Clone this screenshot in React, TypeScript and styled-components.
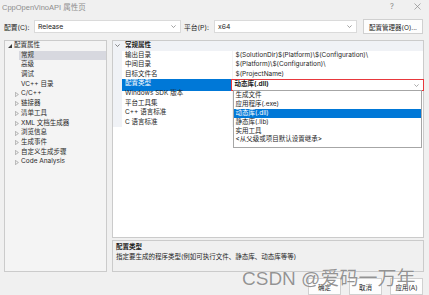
import styled, { createGlobalStyle } from "styled-components";

const GlobalStyle = createGlobalStyle`
  html, body {
    margin: 0;
    padding: 0;
    background: #f0f0f0;
  }
  body {
    font-family: Inter, "Noto Sans CJK SC", sans-serif;
    color: #1e1e1e;
  }
`;

const Window = styled.div`
  position: relative;
  width: 429px;
  height: 295px;
  overflow: hidden;
  background: #f0f0f0;
  font-size: 6.5px;
`;

const TitleBar = styled.div`
  display: flex;
  align-items: center;
  height: 13px;
  padding: 0 7px 0 2px;
`;

const Title = styled.span`
  flex: 1;
  font-family: "Liberation Sans", "Noto Sans CJK SC", sans-serif;
  font-size: 7.5px;
  color: #8e8e8e;
`;

const TitleButton = styled.span`
  width: 10px;
  display: flex;
  justify-content: center;
  color: #8a8a8a;
  font-size: 7.5px;
  & + & {
    margin-left: 15px;
  }
`;

const ConfigRow = styled.div`
  display: flex;
  align-items: center;
  height: 15px;
  margin-top: 6px;
  padding-left: 4px;
`;

const Label = styled.span<{ $w: number; $ml?: number }>`
  width: ${(p) => p.$w}px;
  margin-left: ${(p) => p.$ml ?? 0}px;
  font-size: 6.8px;
  white-space: nowrap;
`;

const Combo = styled.div<{ $w: number }>`
  box-sizing: border-box;
  width: ${(p) => p.$w}px;
  height: 13px;
  display: flex;
  align-items: center;
  justify-content: space-between;
  padding: 0 4px 0 3px;
  background: #fff;
  border: 1px solid #dadada;
  font-size: 6.8px;
`;

const Button = styled.div<{ $w: number; $ml?: number }>`
  box-sizing: border-box;
  width: ${(p) => p.$w}px;
  height: 15px;
  margin-left: ${(p) => p.$ml ?? 0}px;
  display: flex;
  align-items: center;
  justify-content: center;
  background: #fdfdfd;
  border: 1px solid #d0d0d0;
  font-size: 6.5px;
  white-space: nowrap;
`;

const Body = styled.div`
  display: flex;
  gap: 5px;
  height: 232px;
  margin-top: 6px;
  padding-left: 4px;
`;

const TreePanel = styled.div`
  box-sizing: border-box;
  width: 103px;
  background: #f4f4f4;
  border: 1px solid #cbcbcb;
`;

const TreeRow = styled.div<{ $level: number }>`
  display: flex;
  align-items: center;
  height: 9.7px;
  padding-left: ${(p) => (p.$level === 0 ? 2 : 9)}px;
  color: #2b2b2b;
`;

const ArrowSlot = styled.span`
  width: 5px;
  height: 9.7px;
  display: flex;
  align-items: center;
  justify-content: flex-end;
`;

const TreeLabel = styled.span<{ $selected?: boolean }>`
  flex: 1;
  height: 9.7px;
  line-height: 9.7px;
  padding-left: 2px;
  background: ${(p) => (p.$selected ? "#d7d8df" : "transparent")};
  white-space: nowrap;
`;

const RightCol = styled.div`
  width: 312px;
  display: flex;
  flex-direction: column;
  gap: 2px;
`;

const Grid = styled.div`
  box-sizing: border-box;
  height: 198px;
  background: #fff;
  border: 1px solid #cbcbcb;
`;

const GridRow = styled.div<{ $header?: boolean }>`
  display: grid;
  grid-template-columns: 9px 110px 1fr;
  height: 9.6px;
  line-height: 9.6px;
  background: ${(p) => (p.$header ? "#f0f2f6" : "transparent")};
  font-weight: ${(p) => (p.$header ? "bold" : "normal")};
`;

const Gutter = styled.span`
  background: #f0f2f6;
  display: flex;
  align-items: center;
  justify-content: center;
`;

const NameCell = styled.span<{ $active?: boolean }>`
  padding-left: 3px;
  background: ${(p) => (p.$active ? "#0078d7" : "transparent")};
  color: ${(p) => (p.$active ? "#fff" : "inherit")};
  white-space: nowrap;
  overflow: hidden;
`;

const ValueCell = styled.span`
  padding-left: 2.5px;
  border-left: 1px solid #f3f3f3;
  white-space: nowrap;
  overflow: hidden;
`;

const EditCell = styled.span`
  position: relative;
  box-sizing: border-box;
  margin-left: -1px;
  margin-right: -1px;
  display: flex;
  align-items: center;
  justify-content: space-between;
  padding: 0 4px 0 2.5px;
  border: 1px solid #e8383d;
  font-weight: bold;
`;

const DropList = styled.div`
  position: absolute;
  top: 100%;
  left: 1px;
  right: 1px;
  box-sizing: border-box;
  padding: 0 0 3px;
  background: #fff;
  border: 1px solid #a6a6a6;
  font-weight: normal;
  z-index: 2;
`;

const DropItem = styled.div<{ $active?: boolean }>`
  height: 8.9px;
  line-height: 8.9px;
  padding-left: 1.5px;
  background: ${(p) => (p.$active ? "#0078d7" : "transparent")};
  color: ${(p) => (p.$active ? "#fff" : "inherit")};
`;

const Desc = styled.div`
  flex: 1;
  box-sizing: border-box;
  padding: 1px 3px;
  border: 1px solid #cbcbcb;
  background: #f0f0f0;
  line-height: 10px;
`;

const DescTitle = styled.div`
  font-weight: bold;
`;

const Footer = styled.div`
  display: flex;
  justify-content: flex-end;
  gap: 8px;
  margin-top: 6px;
  padding-right: 6px;
`;

const FooterButton = styled(Button)`
  width: 33px;
  height: 17px;
`;

const Watermark = styled.div`
  position: absolute;
  left: 242px;
  top: 263px;
  font-family: "Liberation Sans", "Noto Sans CJK SC", sans-serif;
  font-size: 19px;
  color: rgba(118, 118, 118, 0.78);
  text-shadow: 0 0 1px #fff;
  white-space: nowrap;
  pointer-events: none;
`;

const Chevron = ({ color = "#7a7a7a" }: { color?: string }) => (
  <svg width="5" height="3" viewBox="0 0 5 3">
    <path d="M0.4 0.4 L2.5 2.5 L4.6 0.4" fill="none" stroke={color} strokeWidth="0.7" />
  </svg>
);

const Expanded = () => (
  <svg width="4" height="4" viewBox="0 0 4 4">
    <path d="M4 0 L4 4 L0 4 Z" fill="#3a3a3a" />
  </svg>
);

const Collapsed = () => (
  <svg width="4" height="5" viewBox="0 0 4 5">
    <path d="M0.4 0.4 L3.4 2.5 L0.4 4.6 Z" fill="none" stroke="#8a8a8a" strokeWidth="0.6" />
  </svg>
);

const Close = () => (
  <svg width="7" height="7" viewBox="0 0 7 7">
    <path d="M0.5 0.5 L6.5 6.5 M6.5 0.5 L0.5 6.5" stroke="#8a8a8a" strokeWidth="0.7" />
  </svg>
);

type TreeItem = { label: string; level: number; arrow?: "open" | "closed"; selected?: boolean };

const tree: TreeItem[] = [
  { label: "配置属性", level: 0, arrow: "open" },
  { label: "常规", level: 1, selected: true },
  { label: "高级", level: 1 },
  { label: "调试", level: 1 },
  { label: "VC++ 目录", level: 1 },
  { label: "C/C++", level: 1, arrow: "closed" },
  { label: "链接器", level: 1, arrow: "closed" },
  { label: "清单工具", level: 1, arrow: "closed" },
  { label: "XML 文档生成器", level: 1, arrow: "closed" },
  { label: "浏览信息", level: 1, arrow: "closed" },
  { label: "生成事件", level: 1, arrow: "closed" },
  { label: "自定义生成步骤", level: 1, arrow: "closed" },
  { label: "Code Analysis", level: 1, arrow: "closed" },
];

const props: [string, string][] = [
  ["输出目录", "$(SolutionDir)$(Platform)\\$(Configuration)\\"],
  ["中间目录", "$(Platform)\\$(Configuration)\\"],
  ["目标文件名", "$(ProjectName)"],
  ["配置类型", "动态库(.dll)"],
  ["Windows SDK 版本", ""],
  ["平台工具集", ""],
  ["C++ 语言标准", ""],
  ["C 语言标准", ""],
];

const options = ["生成文件", "应用程序(.exe)", "动态库(.dll)", "静态库(.lib)", "实用工具", "<从父级或项目默认设置继承>"];

export default function App() {
  return (
    <Window>
      <GlobalStyle />
      <TitleBar>
        <Title>CppOpenVinoAPI 属性页</Title>
        <TitleButton>?</TitleButton>
        <TitleButton>
          <Close />
        </TitleButton>
      </TitleBar>

      <ConfigRow>
        <Label $w={30}>配置(C):</Label>
        <Combo $w={147}>
          <span>Release</span>
          <Chevron />
        </Combo>
        <Label $w={30} $ml={3}>平台(P):</Label>
        <Combo $w={143}>
          <span>x64</span>
          <Chevron />
        </Combo>
        <Button $w={60} $ml={6}>配置管理器(O)...</Button>
      </ConfigRow>

      <Body>
        <TreePanel>
          {tree.map((t) => (
            <TreeRow key={t.label} $level={t.level}>
              <ArrowSlot>
                {t.arrow === "open" && <Expanded />}
                {t.arrow === "closed" && <Collapsed />}
              </ArrowSlot>
              <TreeLabel $selected={t.selected}>{t.label}</TreeLabel>
            </TreeRow>
          ))}
        </TreePanel>

        <RightCol>
          <Grid>
            <GridRow $header>
              <Gutter>
                <Chevron color="#555" />
              </Gutter>
              <NameCell>常规属性</NameCell>
              <span />
            </GridRow>
            {props.map(([name, value]) => {
              const active = name === "配置类型";
              return (
                <GridRow key={name}>
                  <Gutter />
                  <NameCell $active={active}>{name}</NameCell>
                  {active ? (
                    <EditCell>
                      <span>{value}</span>
                      <Chevron color="#888" />
                      <DropList>
                        {options.map((o) => (
                          <DropItem key={o} $active={o === value}>
                            {o}
                          </DropItem>
                        ))}
                      </DropList>
                    </EditCell>
                  ) : (
                    <ValueCell>{value}</ValueCell>
                  )}
                </GridRow>
              );
            })}
          </Grid>
          <Desc>
            <DescTitle>配置类型</DescTitle>
            <div>指定要生成的程序类型(例如可执行文件、静态库、动态库等等)</div>
          </Desc>
        </RightCol>
      </Body>

      <Footer>
        <FooterButton $w={33}>确定</FooterButton>
        <FooterButton $w={33}>取消</FooterButton>
        <FooterButton $w={33}>应用(A)</FooterButton>
      </Footer>

      <Watermark>CSDN @爱码一万年</Watermark>
    </Window>
  );
}
